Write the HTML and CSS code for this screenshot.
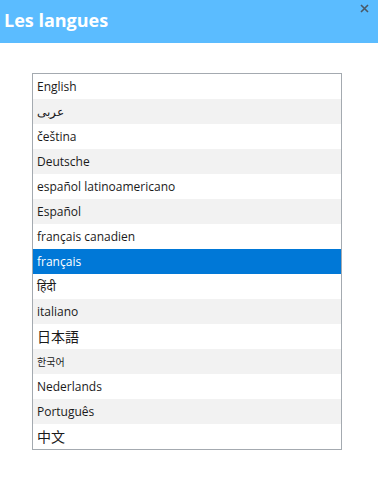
FILE: index.html
```html
<!DOCTYPE html>
<html lang="fr">
<head>
    <meta charset="UTF-8">
    <meta name="viewport" content="width=device-width, initial-scale=1.0">
    <title>Les langues</title>
    <link rel="stylesheet" href="styles.css">
</head>
<body>
    <div class="header">
        <span class="title">Les langues</span>
        <svg class="close" width="9" height="9" viewBox="0 0 9 9">
            <path d="M1 1 L8 8 M8 1 L1 8" stroke="#4a5866" stroke-width="1.6" fill="none"/>
        </svg>
    </div>

    <div class="content">
        <ul class="lang-list">
            <li>English</li>
            <li lang="ar">عربى</li>
            <li>čeština</li>
            <li>Deutsche</li>
            <li>español latinoamericano</li>
            <li>Español</li>
            <li>français canadien</li>
            <li class="selected">français</li>
            <li lang="hi">हिंदी</li>
            <li>italiano</li>
            <li lang="ja" class="cjk">日本語</li>
            <li lang="ko" class="ko">한국어</li>
            <li>Nederlands</li>
            <li>Português</li>
            <li lang="zh" class="cjk">中文</li>
        </ul>
    </div>
</body>
</html>
```

FILE: styles.css
```css
body {
    font-family: 'Open Sans', 'Noto Sans', sans-serif;
    background-color: #ffffff;
    margin: 0;
    padding: 0;
}

.header {
    background-color: #5bbcff;
    height: 43px;
    display: flex;
    align-items: center;
    justify-content: space-between;
    padding: 0 0 0 4px;
}

.title {
    color: white;
    font-size: 18px;
    font-weight: bold;
    margin-top: -4px;
}

.close {
    align-self: flex-start;
    margin: 4px 9px 0 0;
}

.content {
    padding: 30px 36px 0 32px;
}

.lang-list {
    list-style: none;
    margin: 0;
    padding: 0;
    border: 1px solid #a4aab0;
}

.lang-list li {
    height: 25px;
    line-height: 25px;
    padding-left: 4px;
    font-size: 12px;
    color: #1a1a1a;
    white-space: nowrap;
}

.lang-list li:nth-child(even) {
    background-color: #f2f2f2;
}

.lang-list li.selected {
    background-color: #0078d7;
    color: white;
}

.lang-list li.cjk {
    font-family: 'Noto Sans CJK JP', sans-serif;
    font-size: 14px;
}

.lang-list li.ko {
    font-family: 'Noto Sans CJK KR', sans-serif;
    font-size: 10px;
}
```
